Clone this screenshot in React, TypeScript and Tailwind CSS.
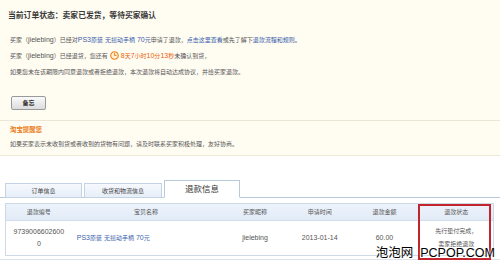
import React from "react";

const cols = [
  { title: "退款编号", w: "w-[66px]" },
  { title: "宝贝名称", w: "w-[149px]" },
  { title: "买家昵称", w: "w-[70px]" },
  { title: "申请时间", w: "w-[60px]" },
  { title: "退款金额", w: "w-[70px]" },
  { title: "退款状态", w: "w-[74px]" },
];

// latin runs inside the small CJK copy
const L = ({ children }: { children: React.ReactNode }) => <span className="text-[7px]">{children}</span>;

const ClockIcon = () => (
  <svg viewBox="0 0 10 10" className="inline-block w-[9px] h-[9px] mx-[2px] -mt-[2px] align-middle">
    <circle cx="5" cy="5" r="4.2" fill="#fff1cf" stroke="#e8801e" strokeWidth="1.2" />
    <path d="M5 2.6V5h1.9" fill="none" stroke="#e8801e" strokeWidth="1" strokeLinecap="round" />
  </svg>
);

export default function App() {
  return (
    <div
      className="relative w-[500px] h-[263px] overflow-hidden bg-white text-[#555]"
      style={{ fontFamily: '"Liberation Sans", "Noto Sans CJK SC", sans-serif' }}
    >
      {/* order status panel */}
      <div className="bg-[#fffcf2] border-b border-[#eee8d6]">
        <div className="pl-[8px] pt-[9px]">
          <h2 className="text-[7.8px] leading-[14px] font-bold text-[#3a3a3a]">
            当前订单状态：卖家已发货，等待买家确认
          </h2>
          <div className="mt-[9px] pl-[2px] text-[6px] leading-[16px]">
            <p>
              买家（<L>jielebing</L>）已经对
              <a className="text-[#3a5fab]">
                <L>PS3</L>原装<L> </L>无摇动手柄<L> 70</L>元
              </a>
              申请了退款，<a className="text-[#3a5fab]">点击这里查看</a>或先了解下
              <a className="text-[#3a5fab]">退款流程和规则</a>。
            </p>
            <p>
              买家（<L>jielebing</L>）已经退货，您还有
              <ClockIcon />
              <span className="text-[#e8620a]">
                <L>8</L>天<L>7</L>小时<L>10</L>分<L>13</L>秒
              </span>
              未确认到货，
            </p>
            <p>如果您未在该期限内同意退款或者拒绝退款，本次退款将自动达成协议，并给买家退款。</p>
          </div>
          <button className="mt-[16px] mb-[10px] ml-[3px] w-[35px] h-[14px] rounded-[2px] border border-[#9a9a9a] bg-gradient-to-b from-[#fafafa] to-[#dcdcdc] text-[6px] leading-[12px] font-bold text-[#333]">
            备忘
          </button>
        </div>
        <div className="border-t border-[#ebe6d6] pl-[10px] pt-[3px] pb-[5px]">
          <p className="text-[6.4px] leading-[12px] font-bold text-[#ea7a16]">淘宝提醒您</p>
          <p className="mt-[2px] text-[6px] leading-[12px]">
            如果买家表示未收到货或者收到的货物有问题，请及时联系买家积极处理，友好协商。
          </p>
        </div>
      </div>

      {/* tabs */}
      <div className="mt-[24px] flex items-end gap-[2px] pl-[5px] border-b border-[#b8c9dc] h-[18px]">
        <div className="w-[77px] h-[15px] -mb-px border border-[#c4d3e4] bg-gradient-to-b from-[#f6f9fd] to-[#e6eef8] text-center text-[6px] leading-[14px] text-[#444]">
          订单信息
        </div>
        <div className="w-[78px] h-[15px] -mb-px border border-[#c4d3e4] bg-gradient-to-b from-[#f6f9fd] to-[#e6eef8] text-center text-[6px] leading-[14px] text-[#444]">
          收货和物流信息
        </div>
        <div className="w-[76px] h-[18px] -mb-px border border-[#b8c9dc] border-b-white bg-white text-center text-[8.5px] leading-[17px] text-[#333]">
          退款信息
        </div>
      </div>

      {/* refund table */}
      <div className="relative mt-[5px] ml-[5px] w-[489px] border border-[#cdd9e7]">
        <div className="flex h-[17px] bg-gradient-to-b from-[#edf3fb] to-[#e2ebf7] border-b border-[#d3deeb]">
          {cols.map((c) => (
            <div key={c.title} className={`${c.w} text-center text-[6px] leading-[17px] text-[#555]`}>
              {c.title}
            </div>
          ))}
        </div>
        <div className="flex h-[34px] items-center text-[7px] text-[#555]">
          <div className="w-[66px] text-center leading-[12px]">
            9739006602600
            <br />0
          </div>
          <div className="w-[149px] pl-[5px] text-[6px] text-[#3a5fab]">
            <L>PS3</L>原装<L> </L>无摇动手柄<L> 70</L>元
          </div>
          <div className="w-[70px] text-center">jielebing</div>
          <div className="w-[60px] text-center">2013-01-14</div>
          <div className="w-[70px] text-center">60.00</div>
          <div className="w-[74px] text-center text-[6px] leading-[13px]">
            先行垫付完成，
            <br />卖家拒绝退款
          </div>
        </div>
        <div className="absolute left-[412px] top-0 w-[73px] h-[56px] border-2 border-[#c3242c]" />
      </div>
      <div className="mt-[3px] border-t border-[#dde3ea]" />

      {/* watermark */}
      <div
        className="absolute right-[5px] bottom-[3px] text-[12.5px] leading-[14px] text-black"
        style={{ textShadow: "0 0 2px #fff, 0 0 2px #fff" }}
      >
        泡泡网&nbsp;&nbsp;PCPOP.COM
      </div>
    </div>
  );
}
